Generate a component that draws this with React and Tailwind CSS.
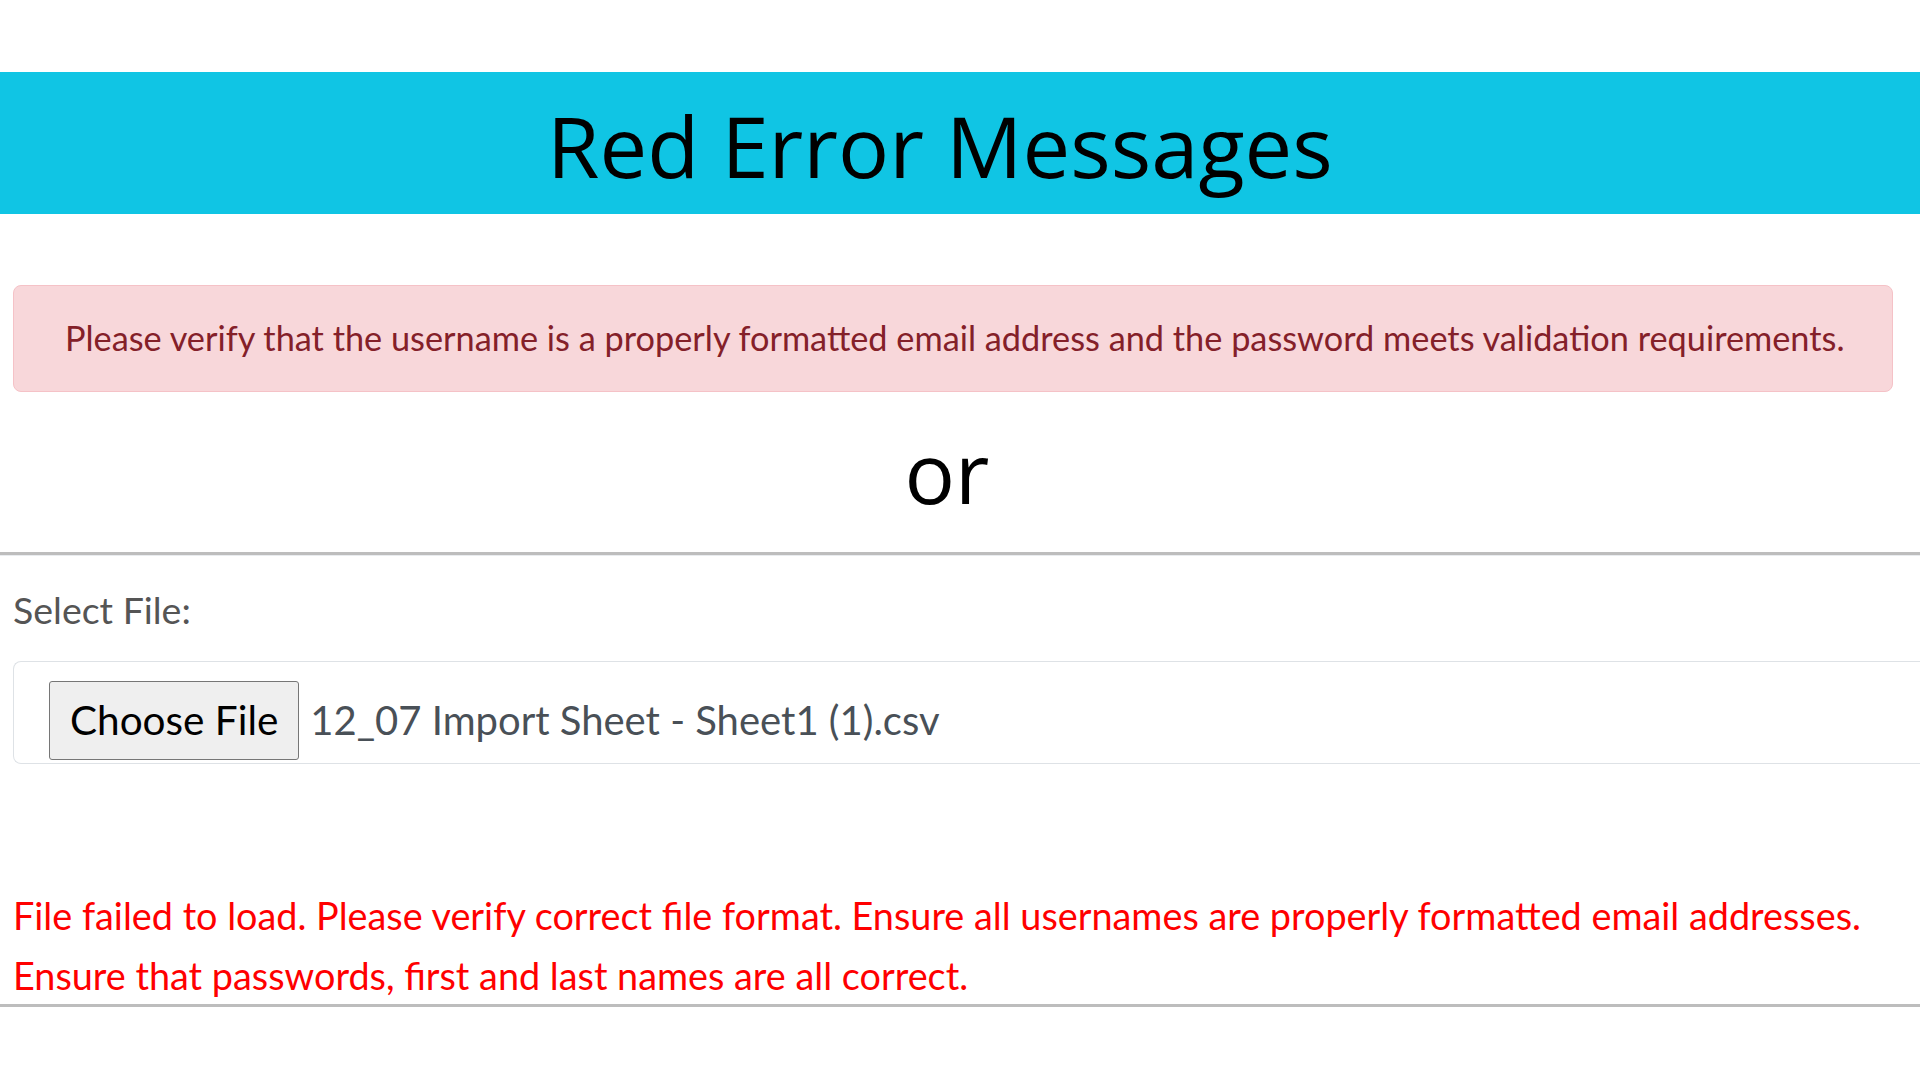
import React from 'react';

const sans = { fontFamily: 'Lato, "Liberation Sans", sans-serif' };

export default function App() {
  return (
    <div className="w-[1920px] h-[1080px] bg-white overflow-hidden" style={sans}>
      <div className="h-[72px]" />
      <div className="h-[142px] bg-[#10c5e4] flex items-center justify-center pr-[40px]">
        <h1 className="text-[85px] leading-none text-black font-['Open_Sans',sans-serif] pt-[4px]">
          Red Error Messages
        </h1>
      </div>
      <div className="h-[71px]" />
      <div className="mx-[13px] w-[1880px] h-[107px] flex items-center pl-[51px] bg-[#f8d7da] border border-[#f5c2c7] rounded-[8px]">
        <p className="text-[34.3px] text-[#842029] leading-none">
          Please verify that the username is a properly formatted email address and the password meets validation requirements.
        </p>
      </div>
      <div className="h-[160px] flex items-center justify-center pr-[26px]">
        <span className="text-[84px] leading-none text-black font-['Open_Sans',sans-serif]">or</span>
      </div>
      <div className="border-t-[3px] border-[#bdbdbd]" />
      <div className="h-[1px] bg-[#e9ecef]" />
      <div className="px-[13px] pt-[35px]">
        <label className="block text-[37.5px] leading-none text-[#555]">Select File:</label>
        <div className="mt-[32px] h-[103px] border border-r-0 border-[#dee2e6] rounded-l-[8px] flex items-end pb-[3px] pl-[35px] mr-[-20px]">
          <button className="h-[79px] px-[20px] bg-[#efefef] border border-[#767676] rounded-[3px] text-[40.5px] text-black leading-none">
            Choose File
          </button>
          <span className="ml-[11px] self-center mt-[18px] text-[40px] text-[#495057] leading-none">12_07 Import Sheet - Sheet1 (1).csv</span>
        </div>
        <div className="mt-[122px] text-[37.8px] text-[#ff0000] leading-[60px]">
          <p>File failed to load. Please verify correct file format. Ensure all usernames are properly formatted email addresses.</p>
          <p>Ensure that passwords, first and last names are all correct.</p>
        </div>
      </div>
      <div className="mt-[-2px] border-t-[3px] border-[#bdbdbd]" />
    </div>
  );
}
